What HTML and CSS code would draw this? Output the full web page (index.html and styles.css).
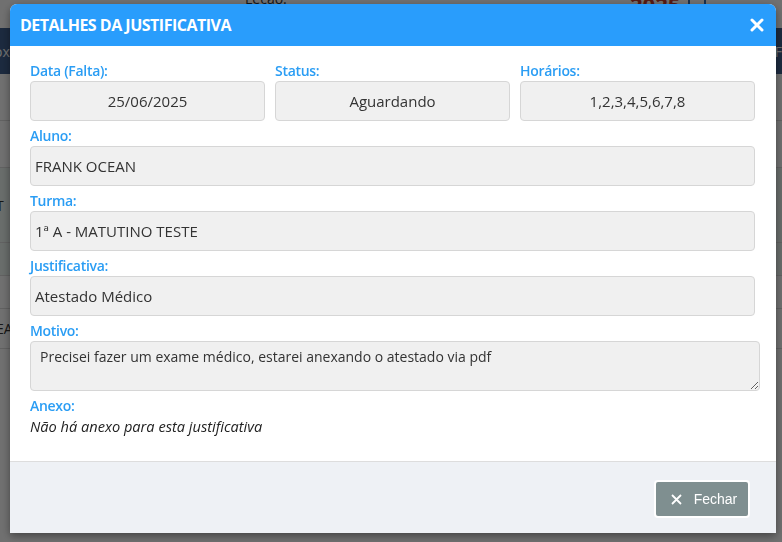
FILE: index.html
```html
<!DOCTYPE html>
<html lang="pt-BR">
<head>
    <meta charset="UTF-8">
    <meta name="viewport" content="width=device-width, initial-scale=1.0">
    <title>Detalhes da Justificativa</title>
    <link rel="stylesheet" href="styles.css">
</head>
<body>
    <!-- page behind the modal -->
    <div class="page">
        <div class="topbar">
            <span class="topbar-label">Lecao:</span>
            <span class="topbar-year">2025</span>
            <span class="topbar-icon"></span>
        </div>
        <div class="navbar">
            <span>ox</span>
            <span>F</span>
        </div>
        <div class="row"></div>
        <div class="row"></div>
        <div class="row row-tint tall"><span>T</span></div>
        <div class="row row-tint short"></div>
        <div class="row short"></div>
        <div class="row"><span>EA</span></div>
    </div>

    <div class="backdrop"></div>

    <div class="modal">
        <div class="modal-header">
            <h4>Detalhes da Justificativa</h4>
            <button class="close" aria-label="Fechar">
                <svg width="14" height="14" viewBox="0 0 14 14"><path d="M2 2 L12 12 M12 2 L2 12" stroke="#fff" stroke-width="3" stroke-linecap="round"/></svg>
            </button>
        </div>

        <div class="modal-body">
            <div class="cols">
                <div class="field">
                    <label>Data (Falta):</label>
                    <div class="input center">25/06/2025</div>
                </div>
                <div class="field">
                    <label>Status:</label>
                    <div class="input center">Aguardando</div>
                </div>
                <div class="field">
                    <label>Horários:</label>
                    <div class="input center">1,2,3,4,5,6,7,8</div>
                </div>
            </div>

            <div class="field">
                <label>Aluno:</label>
                <div class="input">FRANK OCEAN</div>
            </div>
            <div class="field">
                <label>Turma:</label>
                <div class="input">1ª A - MATUTINO TESTE</div>
            </div>
            <div class="field">
                <label>Justificativa:</label>
                <div class="input">Atestado Médico</div>
            </div>
            <div class="field">
                <label>Motivo:</label>
                <textarea readonly>Precisei fazer um exame médico, estarei anexando o atestado via pdf</textarea>
            </div>
            <div class="field">
                <label>Anexo:</label>
                <p class="empty">Não há anexo para esta justificativa</p>
            </div>
        </div>

        <div class="modal-footer">
            <button class="btn-close">
                <svg width="11" height="11" viewBox="0 0 11 11"><path d="M1 1 L10 10 M10 1 L1 10" stroke="#fff" stroke-width="1.8"/></svg>
                Fechar
            </button>
        </div>
    </div>
</body>
</html>
```

FILE: styles.css
```css
body {
    margin: 0;
    font-family: 'Open Sans', 'Noto Sans', sans-serif;
    color: #333;
    background: #fff;
    overflow: hidden;
}

/* background page */
.page {
    height: 542px;
}
.topbar {
    height: 28px;
    position: relative;
    font-size: 14px;
}
.topbar-label {
    position: absolute;
    left: 245px;
    top: -11px;
}
.topbar-year {
    position: absolute;
    left: 630px;
    top: -11px;
    color: #c0392b;
    font-size: 22px;
    font-weight: 700;
}
.topbar-icon {
    position: absolute;
    left: 688px;
    top: -6px;
    width: 14px;
    height: 14px;
    border: 2px solid #3a6fb0;
}
.navbar {
    height: 46px;
    background: #40608f;
    color: #fff;
    display: flex;
    justify-content: space-between;
    align-items: center;
    font-size: 14px;
    margin: 0 0 0 -6px;
}
.row {
    height: 46px;
    border-bottom: 1px solid #ddd;
    display: flex;
    align-items: center;
    font-size: 14px;
}
.row span {
    margin-left: -4px;
}
.row-tint {
    background: #eef7f3;
}
.tall {
    height: 74px;
}
.short {
    height: 32px;
}
.row:last-child {
    height: 39px;
}

.backdrop {
    position: fixed;
    inset: 0;
    background: rgba(0, 0, 0, 0.56);
}

/* modal */
.modal {
    position: fixed;
    top: 4px;
    left: 10px;
    width: 766px;
    height: 529px;
    background: #fff;
    border-radius: 7px 7px 0 0;
    box-shadow: 0 3px 9px rgba(0, 0, 0, 0.4);
    overflow: hidden;
    display: flex;
    flex-direction: column;
}
.modal-header {
    height: 42px;
    background: #299dfc;
    display: flex;
    align-items: center;
    justify-content: space-between;
    padding: 0 12px 0 10px;
}
.modal-header h4 {
    margin: 0;
    color: #fff;
    font-size: 16px;
    font-weight: 700;
    text-transform: uppercase;
    letter-spacing: -0.5px;
}
.close {
    background: none;
    border: none;
    padding: 0;
    display: flex;
    cursor: pointer;
}

.modal-body {
    padding: 15px 21px 25px 20px;
}
.cols {
    display: grid;
    grid-template-columns: 1fr 1fr 1fr;
    gap: 10px;
}
.field {
    margin-bottom: 5px;
}
.field:last-child {
    margin-bottom: 0;
}
label {
    display: block;
    color: #2a9df4;
    font-size: 14px;
    font-weight: 600;
    line-height: 20px;
    letter-spacing: -0.3px;
}
.input {
    height: 40px;
    box-sizing: border-box;
    background: #f0f0f0;
    border: 1px solid #d6d6d6;
    border-radius: 4px;
    padding: 0 4px;
    font-size: 15px;
    line-height: 38px;
}
.center {
    text-align: center;
}
textarea {
    display: block;
    width: calc(100% + 5px);
    height: 50px;
    box-sizing: border-box;
    background: #f0f0f0;
    border: 1px solid #d6d6d6;
    border-radius: 4px;
    padding: 5px 9px;
    font-family: 'Open Sans', 'Noto Sans', sans-serif;
    font-size: 14px;
    color: #333;
    outline: none;
}
.empty {
    margin: 0;
    font-style: italic;
    font-size: 14.6px;
    line-height: 20px;
    color: #222;
}

.modal-footer {
    flex: 1;
    background: #eef1f5;
    border-top: 1px solid #ddd;
    display: flex;
    justify-content: flex-end;
    align-items: flex-start;
    padding: 18px 26px 0 0;
}
.btn-close {
    height: 38px;
    width: 96px;
    background: #7f8f90;
    color: #fff;
    border: 2px solid #fff;
    border-radius: 4px;
    padding: 0 0 0 4px;
    font-family: 'Liberation Sans', Arial, sans-serif;
    font-size: 14px;
    display: flex;
    align-items: center;
    justify-content: center;
    gap: 12px;
    cursor: pointer;
}
```
